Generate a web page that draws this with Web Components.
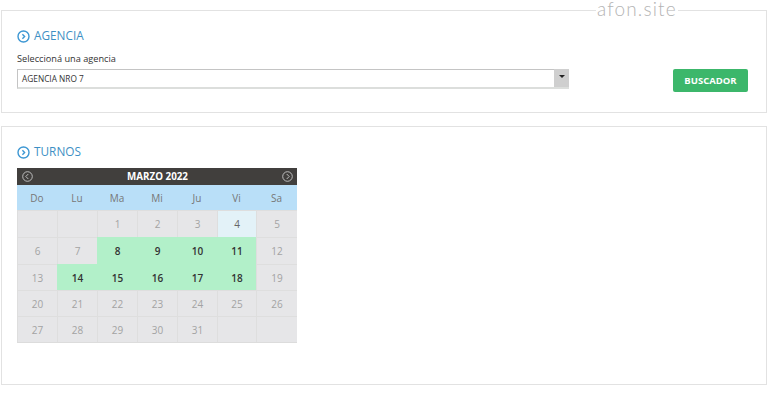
<!DOCTYPE html>
<html>
<head>
<meta charset="utf-8">
<style>
html, body { margin: 0; background: #fff; }
body { font-family: "Open Sans", sans-serif; width: 768px; height: 402px; overflow: hidden; }
</style>
</head>
<body>
<app-page>
  <app-panel title="AGENCIA" style="height: 103px">
    <agency-form label="Seleccioná una agencia" value="AGENCIA NRO 7" action="BUSCADOR"></agency-form>
  </app-panel>
  <app-panel title="TURNOS" style="height: 259px">
    <turnos-calendar month="MARZO 2022"></turnos-calendar>
  </app-panel>
</app-page>

<script>
class AppPage extends HTMLElement {
  constructor() {
    super();
    this._root = this.attachShadow({mode: 'open'});
    this._root.innerHTML = `
<style>
:host { display: block; position: relative; height: 402px; box-sizing: border-box; padding: 10px 1px 0 1px; }
.stack { display: flex; flex-direction: column; gap: 13px; }
.mark {
  position: absolute; left: 596px; top: 0; height: 18px; padding: 0 1px;
  font: 300 19px/18px Lato, sans-serif; letter-spacing: 1.15px; color: #b4b4b4; background: #fff;
}
</style>
<div class="stack"><slot></slot></div>
<div class="mark">afon.site</div>`;
  }
}

class AppPanel extends HTMLElement {
  constructor() {
    super();
    this._root = this.attachShadow({mode: 'open'});
  }
  connectedCallback() {
    this._root.innerHTML = `
<style>
:host { display: block; box-sizing: border-box; border: 1px solid #e2e2e2; padding: 14px 16px 0 15px; background: #fff; }
.title { display: flex; align-items: center; gap: 4px; height: 20px; margin-bottom: 7px; color: #3d8fc4; font-size: 11.8px; line-height: 20px; }
svg { display: block; margin-top: 3px; }
</style>
<div class="title">
  <svg width="13" height="13" viewBox="0 0 13 13" fill="none" stroke="#3d97d3">
    <circle cx="6.5" cy="6.5" r="5.5" stroke-width="1.4"/>
    <path d="M5.4 4.3 7.6 6.5 5.4 8.7" stroke-width="1.4"/>
  </svg>
  <span>${this.getAttribute('title')}</span>
</div>
<slot></slot>`;
  }
}

class AgencyForm extends HTMLElement {
  constructor() {
    super();
    this._root = this.attachShadow({mode: 'open'});
  }
  connectedCallback() {
    this._root.innerHTML = `
<style>
:host { display: block; }
label { display: block; font-size: 9.2px; line-height: 13px; color: #333; margin-bottom: 4px; }
.row { display: flex; align-items: flex-start; }
.select {
  box-sizing: border-box; width: 552px; height: 20px; display: flex; justify-content: space-between;
  border: 1px solid #c4c4c4; border-bottom: 2px solid #dcdedc; border-right: 0; background: #fff;
}
.value { font-size: 8.3px; line-height: 18px; padding-left: 4px; color: #333; }
.arrow { width: 15px; height: 18px; margin-top: -1px; background: #cfcfcf; display: flex; align-items: center; justify-content: center; padding-bottom: 3px; box-sizing: border-box; }
.arrow i { width: 0; height: 0; border: 3px solid transparent; border-top: 3px solid #222; border-bottom: 0; }
button {
  margin: 0 0 0 104px; width: 75px; height: 23px; padding: 0; border: 0; border-radius: 2px;
  background: #3cb76b; color: #fff; font: 700 9.5px "Open Sans", sans-serif;
}
</style>
<label>${this.getAttribute('label')}</label>
<div class="row">
  <div class="select"><span class="value">${this.getAttribute('value')}</span><span class="arrow"><i></i></span></div>
  <button>${this.getAttribute('action')}</button>
</div>`;
  }
}

class TurnosCalendar extends HTMLElement {
  constructor() {
    super();
    this._root = this.attachShadow({mode: 'open'});
  }
  arrow(d) {
    return `<svg width="11" height="11" viewBox="0 0 11 11" fill="none" stroke="#c9c9c9" stroke-width="0.9"><circle cx="5.5" cy="5.5" r="4.8"/><path d="${d}"/></svg>`;
  }
  connectedCallback() {
    const days = ['Do','Lu','Ma','Mi','Ju','Vi','Sa'];
    const open = [8,9,10,11,14,15,16,17,18];
    let cells = '<span class="d"></span><span class="d"></span>';
    for (let n = 1; n <= 31; n++) {
      let cls = 'd';
      if (open.includes(n)) cls += ' open';
      if (n == 4) cls += ' today';
      cells += `<span class="${cls}">${n}</span>`;
    }
    cells += '<span class="d"></span><span class="d"></span>';
    this._root.innerHTML = `
<style>
:host { display: block; width: 280px; margin-top: 0; }
.head {
  height: 17px; background: #413f3d; color: #fff; font-size: 9.8px; font-weight: 700;
  display: flex; justify-content: space-between; align-items: center; padding: 0 4px 0 5px;
}
.week, .grid { display: grid; grid-template-columns: 40px 40px 40px 40px 40px 39px 41px; }
.week { height: 25px; background: #b9dff8; }
.week span { display: flex; align-items: center; justify-content: center; font-size: 10px; color: #777; }
.grid { grid-template-rows: 27px 27px 26px 26px 26px; background: #e6e6e8; border-bottom: 1px solid #dcdcdc; }
.d {
  box-sizing: border-box; display: flex; align-items: center; justify-content: center;
  font-size: 10px; color: #a3a3a3; border-left: 1px solid #dedede; border-top: 1px solid #dedede;
}
.d.open { background: #b2f0c9; color: #333; font-weight: 600; border-color: #b2f0c9; }
.d.today { background: #e3f2f8; color: #666; }
</style>
<div class="head">${this.arrow('M6.3 3 3.8 5.5 6.3 8')}<span>${this.getAttribute('month')}</span>${this.arrow('M4.7 3 7.2 5.5 4.7 8')}</div>
<div class="week">${days.map(d => `<span>${d}</span>`).join('')}</div>
<div class="grid">${cells}</div>`;
  }
}

window.customElements.define('app-page', AppPage);
window.customElements.define('app-panel', AppPanel);
window.customElements.define('agency-form', AgencyForm);
window.customElements.define('turnos-calendar', TurnosCalendar);
</script>
</body>
</html>
